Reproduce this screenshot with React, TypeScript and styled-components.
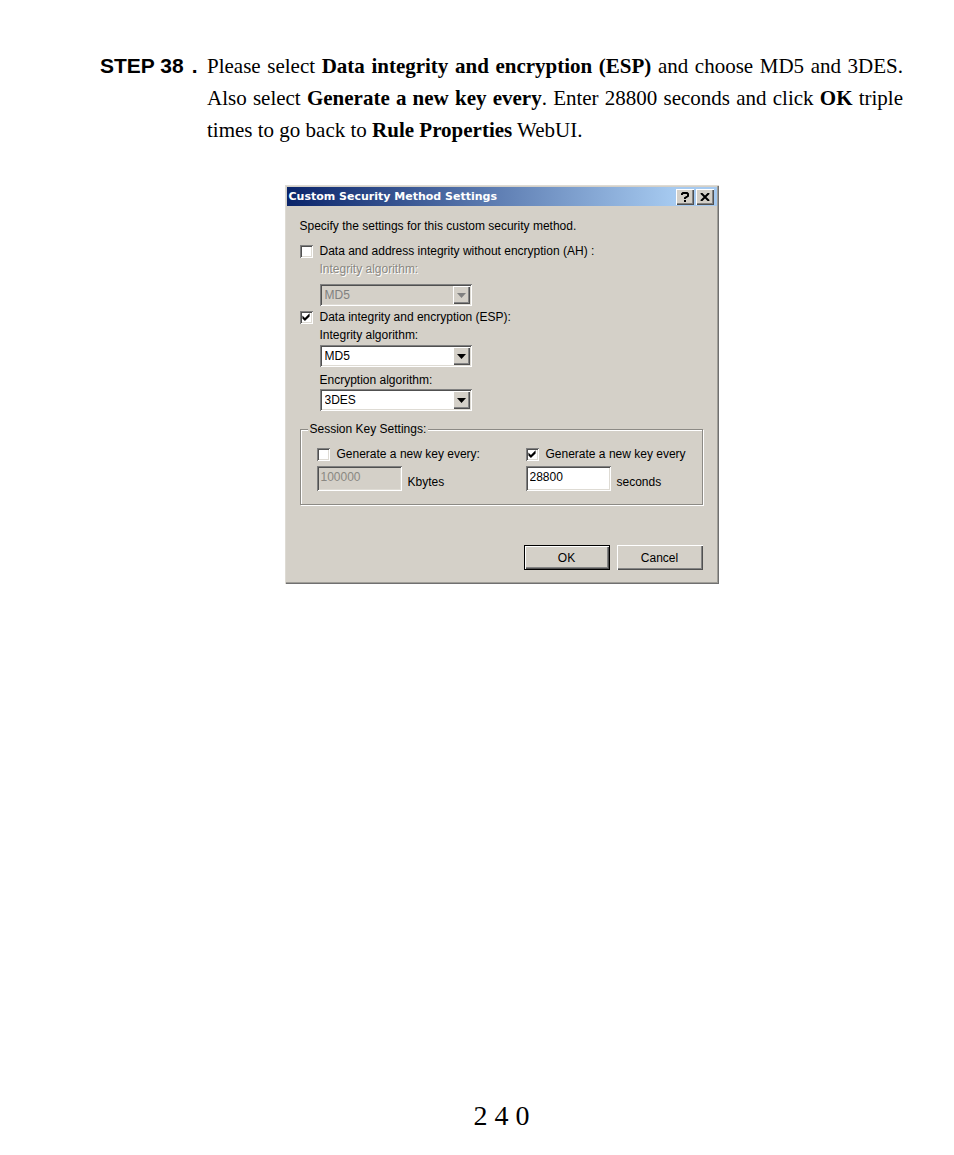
import React from "react";
import styled, { createGlobalStyle } from "styled-components";

const face = "#d4d0c8";
const raised =
  "inset 1px 1px #fff, inset -1px -1px #505050, inset -2px -2px #848484";
const sunken =
  "inset 1px 1px #808080, inset -1px -1px #fff, inset 2px 2px #505050, inset -2px -2px #dedbd4";

const GlobalStyle = createGlobalStyle`
  *, *::before, *::after { box-sizing: border-box; }
  body { margin: 0; background: #fff; color: #000; }
  button, input, select { font: inherit; color: inherit; }
`;

const Page = styled.main`
  min-height: 100vh;
  display: flex;
  flex-direction: column;
  padding: 50px 51px 20px 100px;
  font-family: "Liberation Serif", "Times New Roman", serif;
`;

const Step = styled.section`
  display: grid;
  grid-template-columns: 107px 1fr;
  font-size: 21px;
  line-height: 32px;
`;

const StepLabel = styled.h1`
  margin: 0;
  display: flex;
  gap: 8px;
  font: bold 21px/32px "Liberation Sans", Arial, sans-serif;
`;

const StepText = styled.p`
  margin: 0;
  text-align: justify;
`;

const Dialog = styled.form`
  width: 434px;
  max-width: 100%;
  align-self: center;
  margin: 39px 0 0;
  padding: 2px;
  background: ${face};
  box-shadow: inset 1px 1px #dedbd4, inset -1px -1px #707070, inset -2px -2px #a09e98;
  font: 12px/18px "Liberation Sans", Arial, sans-serif;
`;

const TitleBar = styled.header`
  display: flex;
  align-items: center;
  height: 19px;
  padding: 0 3px 0 2px;
  background: linear-gradient(to right, #0a246a, #a6caf0 90%);
  color: #fff;
`;

const Title = styled.h2`
  flex: 1;
  margin: 0;
  font: bold 11px/18px "DejaVu Sans", Tahoma, sans-serif;
`;

const TitleButton = styled.button`
  width: 18px;
  height: 16px;
  margin-left: 2px;
  padding: 0;
  display: grid;
  place-items: center;
  border: 0;
  background: ${face};
  box-shadow: ${raised};
  color: #000;
`;

const Body = styled.div`
  padding: 11px 14px 12px 13px;
`;

const Intro = styled.p`
  margin: 0 0 7px;
`;

const CheckLabel = styled.label`
  display: flex;
  align-items: center;
  gap: 7px;
  white-space: nowrap;
`;

const Tick = styled.input`
  appearance: none;
  width: 13px;
  height: 13px;
  margin: 0;
  display: grid;
  place-items: center;
  flex: none;
  background: #fff;
  box-shadow: ${sunken};

  &:checked::before {
    content: "";
    width: 9px;
    height: 9px;
    background: #000;
    clip-path: polygon(10% 34%, 38% 60%, 90% 8%, 90% 44%, 38% 94%, 10% 68%);
  }
`;

const Method = styled.section`
  padding-bottom: 2px;
`;

const Fields = styled.div`
  display: grid;
  gap: 4px;
  padding-left: 20px;
`;

const Field = styled.label<{ $off?: boolean; $gap?: number }>`
  display: grid;
  justify-items: start;
  gap: ${({ $gap = 0 }) => $gap}px;
  color: ${({ $off }) => ($off ? "#8a8882" : "inherit")};
  text-shadow: ${({ $off }) => ($off ? "1px 1px #fff" : "none")};
`;

const Combo = styled.span`
  position: relative;
  display: block;
`;

const Select = styled.select`
  appearance: none;
  display: block;
  width: 152px;
  height: 22px;
  padding: 0 20px 0 5px;
  border: 0;
  border-radius: 0;
  background: #fff;
  box-shadow: ${sunken};

  &:disabled {
    opacity: 1;
    background: ${face};
    color: #808080;
    text-shadow: none;
  }
`;

const ComboArrow = styled.span`
  position: absolute;
  top: 2px;
  right: 2px;
  width: 17px;
  height: 18px;
  display: grid;
  place-items: center;
  background: ${face};
  box-shadow: ${raised};
  pointer-events: none;
`;

const KeyGroup = styled.fieldset`
  display: grid;
  grid-template-columns: 209px 1fr;
  margin: 7px 0 0;
  padding: 7px 10px 13px 16px;
  min-width: 0;
  border: 1px solid #8c8a85;
  box-shadow: 1px 1px #fff, inset 1px 1px #fff;
`;

const Legend = styled.legend`
  margin-left: -9px;
  padding: 0 2px;
  background: ${face};
`;

const Amount = styled.div`
  display: flex;
  align-items: flex-end;
  gap: 6px;
  margin-top: 3px;
`;

const AmountInput = styled.input`
  width: 85px;
  height: 25px;
  padding: 0 4px 4px;
  border: 0;
  background: #fff;
  box-shadow: ${sunken};

  &:disabled {
    background: ${face};
    color: #8a8882;
  }
`;

const Actions = styled.footer`
  display: flex;
  justify-content: flex-end;
  gap: 7px;
  margin-top: 40px;
`;

const Button = styled.button<{ $primary?: boolean }>`
  width: 86px;
  height: 25px;
  padding: 0;
  border: ${({ $primary }) => ($primary ? "1px solid #000" : "0")};
  background: ${face};
  box-shadow: ${raised};
`;

const PageNumber = styled.footer`
  margin-top: auto;
  text-align: center;
  font-size: 28px;
  line-height: 38px;
`;

function Dropdown({ value, disabled }: { value: string; disabled?: boolean }) {
  return (
    <Combo>
      <Select defaultValue={value} disabled={disabled}>
        <option>{value}</option>
      </Select>
      <ComboArrow>
        <svg width="9" height="5" viewBox="0 0 9 5" aria-hidden="true">
          <path d="M0 0h9L4.500 5z" fill={disabled ? "#808080" : "#000"} />
        </svg>
      </ComboArrow>
    </Combo>
  );
}

export default function App() {
  return (
    <>
      <GlobalStyle />
      <Page>
        <Step>
          <StepLabel>
            <span>STEP 38</span>
            <span>.</span>
          </StepLabel>
          <StepText>
            Please select <b>Data integrity and encryption (ESP)</b> and choose MD5 and
            3DES. Also select <b>Generate a new key every</b>. Enter 28800 seconds and
            click <b>OK</b> triple times to go back to <b>Rule Properties</b> WebUI.
          </StepText>
        </Step>

        <Dialog onSubmit={(e) => e.preventDefault()}>
          <TitleBar>
            <Title>Custom Security Method Settings</Title>
            <TitleButton type="button" aria-label="Help">
              <svg width="8" height="10" viewBox="0 0 8 10" aria-hidden="true">
                <path d="M1 3V2l1-1h4l1 1v2L4 6v1M4 8v2" fill="none" stroke="#000" strokeWidth="2" />
              </svg>
            </TitleButton>
            <TitleButton type="button" aria-label="Close">
              <svg width="10" height="8" viewBox="0 0 10 8" aria-hidden="true">
                <path d="M1 0l8 8M9 0L1 8" stroke="#000" strokeWidth="2" />
              </svg>
            </TitleButton>
          </TitleBar>

          <Body>
            <Intro>Specify the settings for this custom security method.</Intro>

            <Method>
              <CheckLabel>
                <Tick type="checkbox" />
                Data and address integrity without encryption (AH) :
              </CheckLabel>
              <Fields>
                <Field $off $gap={6}>
                  Integrity algorithm:
                  <Dropdown value="MD5" disabled />
                </Field>
              </Fields>
            </Method>

            <Method>
              <CheckLabel>
                <Tick type="checkbox" defaultChecked />
                Data integrity and encryption (ESP):
              </CheckLabel>
              <Fields>
                <Field $gap={1}>
                  Integrity algorithm:
                  <Dropdown value="MD5" />
                </Field>
                <Field>
                  Encryption algorithm:
                  <Dropdown value="3DES" />
                </Field>
              </Fields>
            </Method>

            <KeyGroup>
              <Legend>Session Key Settings:</Legend>
              <div>
                <CheckLabel>
                  <Tick type="checkbox" />
                  Generate a new key every:
                </CheckLabel>
                <Amount>
                  <AmountInput id="kbytes" defaultValue="100000" disabled />
                  <label htmlFor="kbytes">Kbytes</label>
                </Amount>
              </div>
              <div>
                <CheckLabel>
                  <Tick type="checkbox" defaultChecked />
                  Generate a new key every
                </CheckLabel>
                <Amount>
                  <AmountInput id="seconds" defaultValue="28800" />
                  <label htmlFor="seconds">seconds</label>
                </Amount>
              </div>
            </KeyGroup>

            <Actions>
              <Button type="submit" $primary>OK</Button>
              <Button type="button">Cancel</Button>
            </Actions>
          </Body>
        </Dialog>

        <PageNumber>2 4 0</PageNumber>
      </Page>
    </>
  );
}
